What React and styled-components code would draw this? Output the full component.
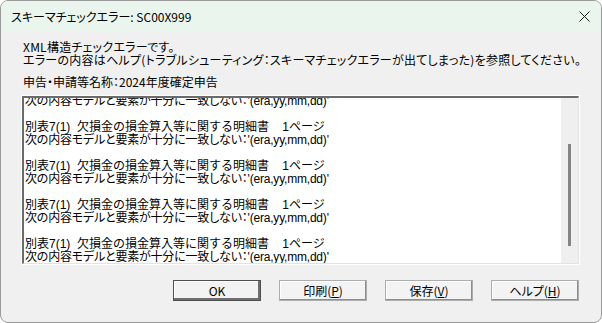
import React from 'react'
import styled, { createGlobalStyle } from 'styled-components'

const GlobalStyle = createGlobalStyle`
  html, body {
    margin: 0;
    padding: 0;
    background: #ffffff;
  }
  body {
    font-family: "Noto Sans CJK JP", "Liberation Sans", sans-serif;
    font-feature-settings: "palt";
  }
`

const Window = styled.div`
  width: 602px;
  height: 323px;
  box-sizing: border-box;
  border: 1px solid #9a9a9a;
  border-radius: 8px;
  overflow: hidden;
  background: #f0f0f0;
  display: flex;
  flex-direction: column;
`
const TitleBar = styled.div`
  height: 31px;
  flex: none;
  background: #eaf6ed;
  display: flex;
  align-items: center;
  justify-content: space-between;
  padding: 0 11px 0 10px;
  font-size: 12px;
  color: #000;
`
const CloseButton = styled.div`
  width: 12px;
  height: 12px;
  display: flex;
  align-items: center;
  justify-content: center;
`
const Body = styled.div`
  flex: 1;
  display: flex;
  flex-direction: column;
  padding: 8px 22px 0 21px;
  font-size: 12px;
  line-height: 13px;
  color: #000;
`
const Message = styled.div`
  padding-left: 1px;
  letter-spacing: 0.25px;
  white-space: nowrap;
`
const Label = styled.div`
  margin-top: 9px;
  padding-left: 1px;
`
const ListBox = styled.div`
  margin-top: 8px;
  height: 168px;
  flex: none;
  box-sizing: border-box;
  display: flex;
  border-top: 2px solid #6b6b6b;
  border-left: 2px solid #6b6b6b;
  border-right: 1px solid #e3e3e3;
  border-bottom: 1px solid #e3e3e3;
  outline: 1px solid #ffffff;
  background: #fff;
`
const Viewport = styled.div`
  flex: 1;
  overflow: hidden;
`
const Lines = styled.div`
  margin-top: -3px;
  padding-left: 1px;
  white-space: pre;
  font-family: "Liberation Sans", "Noto Sans CJK JP", sans-serif;
  font-size: 12px;
`
const Line = styled.div`
  height: 13px;
  font-feature-settings: ${(p) => (p.$palt ? '"palt"' : 'normal')};
  letter-spacing: ${(p) => (p.$palt ? '-0.2px' : '0')};
`
const ScrollTrack = styled.div`
  width: 17px;
  flex: none;
  background: #efefef;
  display: flex;
  justify-content: center;
  padding-top: 46px;
  box-sizing: border-box;
`
const Thumb = styled.div`
  width: 3px;
  height: 102px;
  background: #858585;
`
const ButtonRow = styled.div`
  display: flex;
  justify-content: flex-end;
  gap: 18px;
  margin-top: 16px;
`
const Button = styled.div`
  width: 88px;
  height: 21px;
  box-sizing: border-box;
  display: flex;
  align-items: center;
  justify-content: center;
  background: #f3f3f3;
  font-size: 12px;
  border: 1px solid ${(p) => (p.$default ? '#4f4f4f' : '#adadad')};
  box-shadow: ${(p) =>
    p.$default
      ? 'inset -2px -2px 0 #6f6f6f, inset 1px 1px 0 #ffffff'
      : 'inset -1px -1px 0 #8d8d8d, inset 1px 1px 0 #ffffff'};
  span {
    text-decoration: underline;
  }
`

const mismatch = { text: '次の内容モデルと要素が十分に一致しない：\'(era,yy,mm,dd)\'', palt: true }
const sheet = { text: '別表7(1)  欠損金の損金算入等に関する明細書    1ページ', palt: false }
const blank = { text: '', palt: false }
const rows = [mismatch, blank]
for (let i = 0; i < 4; i++) {
  rows.push(sheet, mismatch, blank)
}

const App = () => {
  return (
    <>
      <GlobalStyle />
      <Window>
        <TitleBar>
          <span>スキーマチェックエラー: SC00X999</span>
          <CloseButton>
            <svg width="11" height="11" viewBox="0 0 11 11">
              <path d="M0.5 0.5 L10.5 10.5 M10.5 0.5 L0.5 10.5" stroke="#1a1a1a" strokeWidth="1" />
            </svg>
          </CloseButton>
        </TitleBar>
        <Body>
          <Message>
            XML構造チェックエラーです。
            <br />
            エラーの内容はヘルプ(トラブルシューティング：スキーマチェックエラーが出てしまった)を参照してください。
          </Message>
          <Label>申告・申請等名称：2024年度確定申告</Label>
          <ListBox>
            <Viewport>
              <Lines>
                {rows.map((r, i) => (
                  <Line key={i} $palt={r.palt}>{r.text}</Line>
                ))}
              </Lines>
            </Viewport>
            <ScrollTrack>
              <Thumb />
            </ScrollTrack>
          </ListBox>
          <ButtonRow>
            <Button $default>OK</Button>
            <Button>印刷(<span>P</span>)</Button>
            <Button>保存(<span>V</span>)</Button>
            <Button>ヘルプ(<span>H</span>)</Button>
          </ButtonRow>
        </Body>
      </Window>
    </>
  )
}

export default App
